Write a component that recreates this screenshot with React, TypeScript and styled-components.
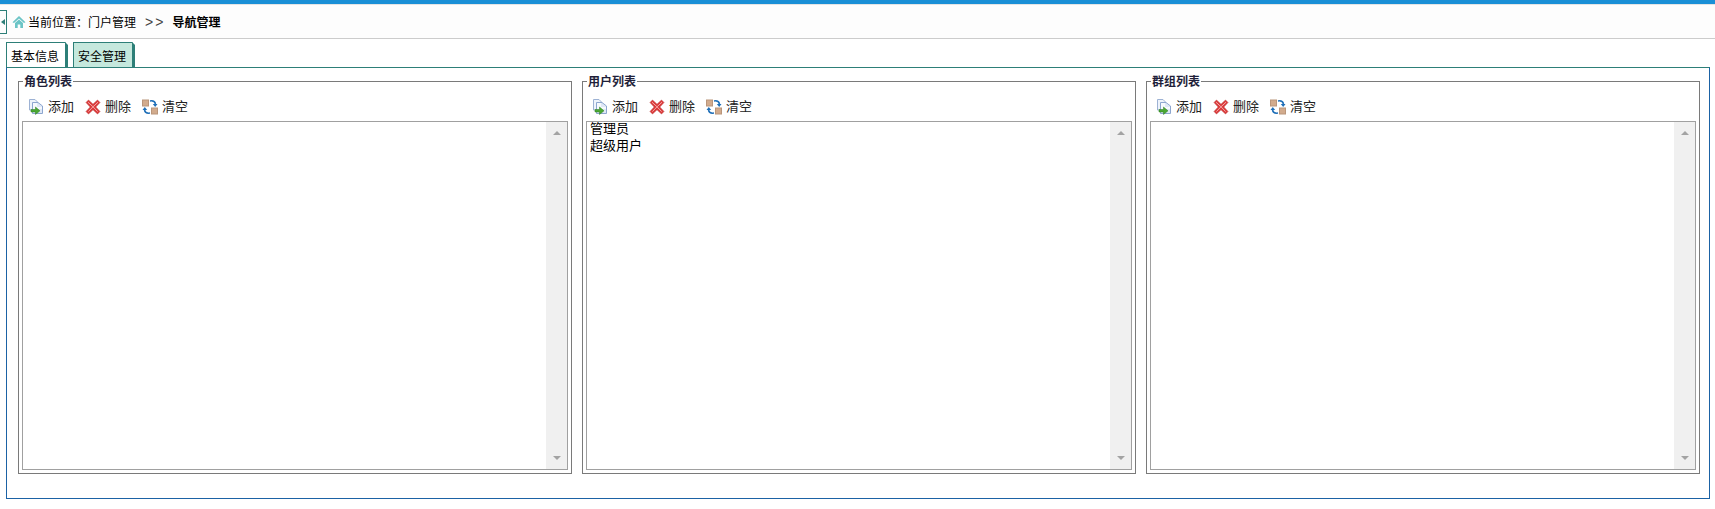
import React from 'react';
import styled, { createGlobalStyle } from 'styled-components';

const Global = createGlobalStyle`
  html, body {
    margin: 0;
    padding: 0;
    background: #fff;
  }
  body {
    font-family: "Noto Sans CJK SC", "Liberation Sans", sans-serif;
    font-size: 12px;
    color: #000;
  }
`;

const Wrapper = styled.div`
  width: 1715px;
  height: 509px;
  overflow: hidden;
  border-top: 4px solid #1a8fd6;
  box-sizing: border-box;
`;

const Crumbs = styled.div`
  height: 35px;
  box-sizing: border-box;
  display: flex;
  align-items: center;
  background: #fdfdfd;
  border-top: 1px solid #e4e4e4;
  border-bottom: 1px solid #cccccc;
`;

const Handle = styled.div`
  width: 7px;
  height: 24px;
  box-sizing: border-box;
  border: 1px solid #2d7f78;
  border-left: 0;
  display: flex;
  align-items: center;
  justify-content: flex-end;
  margin-right: 5px;
  &::before {
    content: "";
    border-style: solid;
    border-width: 3px 4px 3px 0;
    border-color: transparent #2d7f78 transparent transparent;
    margin-right: 1px;
  }
`;

const CrumbText = styled.span`
  margin-left: 2px;
  line-height: 16px;
`;

const CrumbSep = styled.span`
  margin: 0 7px 0 9px;
  font-family: "Liberation Sans", sans-serif;
  font-size: 14px;
  letter-spacing: 2px;
  color: #444;
`;

const CrumbCurrent = styled.span`
  font-weight: 700;
  line-height: 16px;
`;

const Tabs = styled.div`
  display: flex;
  gap: 5px;
  margin: 3px 0 0 6px;
  height: 25px;
`;

const Tab = styled.div<{ $active?: boolean }>`
  width: 62px;
  box-sizing: border-box;
  border: 1px solid #2d7f78;
  border-bottom: 0;
  border-right: 3px solid #2d7f78;
  padding-left: 4px;
  line-height: 26px;
  background: ${(p) => (p.$active ? '#c5e8dd' : '#fff')};
  clip-path: polygon(0 0, calc(100% - 3px) 0, 100% 3px, 100% 100%, 0 100%);
`;

const Panel = styled.div`
  width: 1704px;
  height: 432px;
  box-sizing: border-box;
  margin-left: 6px;
  border: 1px solid #1b62a5;
  border-top-color: #2d7f78;
  padding: 6px 9px 0 11px;
  display: flex;
  gap: 10px;
`;

const Group = styled.fieldset`
  width: 554px;
  height: 400px;
  box-sizing: border-box;
  margin: 0;
  padding: 0 3px 3px;
  border: 1px solid #7a7a7a;
  min-width: 0;
  display: flex;
  flex-direction: column;
`;

const GroupTitle = styled.legend`
  margin-left: 1px;
  padding: 0 1px;
  font-weight: 700;
  line-height: 14px;
  color: #1f1f3a;
`;

const Toolbar = styled.div`
  display: flex;
  align-items: center;
  gap: 11px;
  height: 29px;
  padding: 4px 0 0 6px;
`;

const ToolButton = styled.button`
  display: flex;
  align-items: center;
  gap: 4px;
  padding: 0;
  border: 0;
  background: none;
  font: inherit;
  font-size: 13px;
  line-height: 16px;
  color: #222;
`;

const ToolLabel = styled.span`
  margin-bottom: 2px;
`;

const ListBox = styled.div`
  flex: 1;
  display: flex;
  border: 1px solid #a0a0a0;
  min-height: 0;
`;

const ListItems = styled.ul`
  flex: 1;
  margin: -3px 0 0;
  padding: 0 3px;
  list-style: none;
  font-size: 13px;
  line-height: 17px;
`;

const ScrollTrack = styled.div`
  width: 21px;
  background: #f0f0f0;
  display: flex;
  flex-direction: column;
  justify-content: space-between;
  align-items: center;
  padding: 9px 0;
  box-sizing: border-box;
`;

const ScrollArrow = styled.div<{ $down?: boolean }>`
  width: 0;
  height: 0;
  border-left: 4px solid transparent;
  border-right: 4px solid transparent;
  ${(p) => (p.$down ? 'border-top: 4px solid #a3a3a3;' : 'border-bottom: 4px solid #a3a3a3;')}
`;

function HomeIcon() {
  return (
    <svg width="14" height="14" viewBox="0 0 14 14">
      <path d="M7 1 L13.5 7.2 L12 8 L7 3.4 L2 8 L.5 7.2 Z" fill="#6cc4c6" />
      <path d="M3 8 L7 4.4 L11 8 V13 H8.3 V9.5 H5.7 V13 H3 Z" fill="#6cc4c6" />
    </svg>
  );
}

function AddIcon() {
  return (
    <svg width="16" height="16" viewBox="0 0 16 16">
      <path d="M1.5 .5 H7 L9.5 3 V11 H1.5 Z" fill="#eef3fb" stroke="#9db2d4" />
      <path d="M4.5 3.5 H10 L14.5 7 V14.5 H4.5 Z" fill="#dfe8f6" stroke="#8da6cf" />
      <path d="M5 4 H9 V8 H14 V10 H5 Z" fill="#f6f9fd" />
      <path d="M3 10.5 H7.5 V8 L12 11.8 L7.5 15.5 V13 H3 Z" fill="#4aa832" stroke="#2f7d22" strokeWidth=".5" />
    </svg>
  );
}

function DeleteIcon() {
  return (
    <svg width="16" height="16" viewBox="0 0 16 16">
      <path
        d="M1 3.5 L3.5 1 L8 5.2 L12.5 1 L15 3.5 L10.8 8 L15 12.5 L12.5 15 L8 10.8 L3.5 15 L1 12.5 L5.2 8 Z"
        fill="#dc3a3a"
        stroke="#b03232"
        strokeWidth=".5"
      />
      <path d="M3 3.2 L8 7.8 L13 3.2 M8 7.8 L3.4 12.6 M8 7.8 L12.6 12.6" fill="none" stroke="#f4a6a6" strokeWidth="1" />
    </svg>
  );
}

function ClearIcon() {
  return (
    <svg width="16" height="16" viewBox="0 0 16 16">
      <rect x=".5" y="1" width="6" height="6" fill="#d2ab8d" stroke="#b9957a" />
      <rect x="9.5" y="9" width="6" height="6" fill="#d2ab8d" stroke="#b9957a" />
      <path d="M8 2 C11 1.5 13 2.5 13.5 5" fill="none" stroke="#1f6fb8" strokeWidth="1.5" />
      <path d="M10.8 5 H15.5 L13.2 8 Z" fill="#1f6fb8" />
      <path d="M8 14 C5 14.5 3 13.5 2.5 11" fill="none" stroke="#1f6fb8" strokeWidth="1.5" />
      <path d="M.5 11 H5.2 L2.8 8 Z" fill="#1f6fb8" />
    </svg>
  );
}

const groups = [
  { title: '角色列表', items: [] as string[] },
  { title: '用户列表', items: ['管理员', '超级用户'] },
  { title: '群组列表', items: [] as string[] },
];

function App() {
  return (
    <Wrapper>
      <Global />
      <Crumbs>
        <Handle />
        <HomeIcon />
        <CrumbText>当前位置：门户管理</CrumbText>
        <CrumbSep>&gt;&gt;</CrumbSep>
        <CrumbCurrent>导航管理</CrumbCurrent>
      </Crumbs>
      <Tabs>
        <Tab>基本信息</Tab>
        <Tab $active>安全管理</Tab>
      </Tabs>
      <Panel>
        {groups.map((g) => (
          <Group key={g.title}>
            <GroupTitle>{g.title}</GroupTitle>
            <Toolbar>
              <ToolButton><AddIcon /><ToolLabel>添加</ToolLabel></ToolButton>
              <ToolButton><DeleteIcon /><ToolLabel>删除</ToolLabel></ToolButton>
              <ToolButton><ClearIcon /><ToolLabel>清空</ToolLabel></ToolButton>
            </Toolbar>
            <ListBox>
              <ListItems>
                {g.items.map((item) => (
                  <li key={item}>{item}</li>
                ))}
              </ListItems>
              <ScrollTrack>
                <ScrollArrow />
                <ScrollArrow $down />
              </ScrollTrack>
            </ListBox>
          </Group>
        ))}
      </Panel>
    </Wrapper>
  );
}

export default App;
